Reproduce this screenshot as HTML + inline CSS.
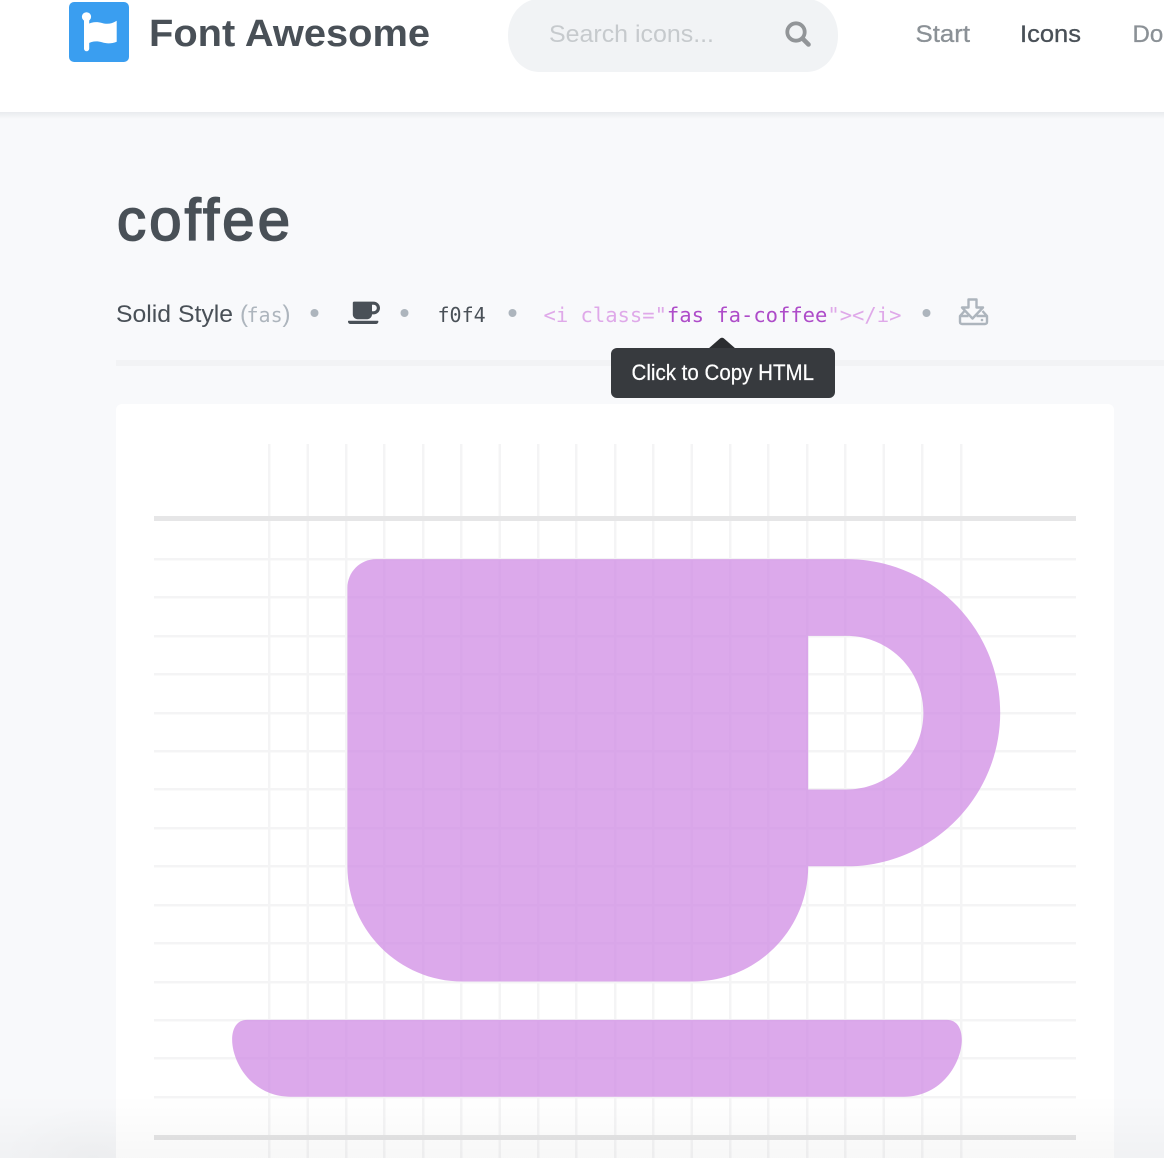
<!DOCTYPE html>
<html lang="en">
<head>
<meta charset="utf-8">
<title>coffee | Font Awesome</title>
<style>
html,body{margin:0;padding:0;width:1164px;height:1158px;overflow:hidden;background:#f8f9fb}
svg{display:block;position:absolute;left:0;top:0}
text{font-family:"Liberation Sans",sans-serif}
.mono,.mono tspan{font-family:"DejaVu Sans Mono",monospace}
</style>
</head>
<body>
<svg width="1164" height="1158" viewBox="0 0 1164 1158" xmlns="http://www.w3.org/2000/svg">
  <defs>
    <linearGradient id="hs" x1="0" y1="0" x2="0" y2="1">
      <stop offset="0" stop-color="#e9ebee"/>
      <stop offset="1" stop-color="#f8f9fb"/>
    </linearGradient>
    <linearGradient id="bot" x1="0" y1="0" x2="0" y2="1">
      <stop offset="0" stop-color="#000" stop-opacity="0"/>
      <stop offset="1" stop-color="#000" stop-opacity=".03"/>
    </linearGradient>
    <radialGradient id="corner" cx=".8" cy="1" r=".8">
      <stop offset="0" stop-color="#000" stop-opacity=".02"/>
      <stop offset="1" stop-color="#000" stop-opacity="0"/>
    </radialGradient>
    <path id="cup" d="M192 384h192c53 0 96-43 96-96h32c70.6 0 128-57.4 128-128S582.6 32 512 32H120c-13.3 0-24 10.700-24 24v232c0 53 43 96 96 96zM512 96c35.300 0 64 28.700 64 64s-28.700 64-64 64h-32V96h32zm47.700 384H48.300c-47.600 0-61-64-36-64h583.300c25 0 11.800 64-35.900 64z"/>
  </defs>

  <!-- page background and header shadow -->
  <rect width="1164" height="1158" fill="#f8f9fb"/>
  <rect y="112" width="1164" height="7" fill="url(#hs)"/>
  <rect width="1164" height="112" fill="#fff"/>

  <!-- logo -->
  <rect x="69" y="2" width="60" height="60" rx="5" fill="#3a9ef0"/>
  <circle cx="86.500" cy="16.800" r="4.600" fill="#fff"/>
  <rect x="84" y="17" width="5.200" height="34.200" rx="2.600" fill="#fff"/>
  <path d="M87 24.500c5-2.800 10-3 15-1.500 5 1.500 9.500 1 14.700-2.300v21c-5 2-9.700 2.200-14.700.6-5-1.600-10-1.300-15 1.700z" fill="#fff"/>
  <text x="149" y="46" font-size="38" font-weight="700" fill="#495057" textLength="281" lengthAdjust="spacingAndGlyphs">Font Awesome</text>

  <!-- search -->
  <rect x="508" y="-1" width="330" height="73" rx="31" ry="36" fill="#f1f3f5"/>
  <text x="549" y="42" font-size="24" fill="#c6cacd" textLength="165" lengthAdjust="spacingAndGlyphs">Search icons...</text>
  <circle cx="796" cy="32" r="8.700" fill="none" stroke="#929598" stroke-width="3.800"/>
  <path d="M802.500 38.500l6 6" fill="none" stroke="#929598" stroke-width="4.600" stroke-linecap="round"/>

  <!-- nav -->
  <text x="915.500" y="42" font-size="24" fill="#8b9196" stroke="#8b9196" stroke-width=".3" textLength="54.500" lengthAdjust="spacingAndGlyphs">Start</text>
  <text x="1020" y="42" font-size="24" fill="#495057" stroke="#495057" stroke-width=".3" textLength="61" lengthAdjust="spacingAndGlyphs">Icons</text>
  <text x="1132.500" y="42" font-size="24" fill="#8b9196" stroke="#8b9196" stroke-width=".3">Do</text>

  <!-- title -->
  <text x="117" y="240" font-size="58" fill="#495057" stroke="#495057" stroke-width="1.700" textLength="173" lengthAdjust="spacing">coffee</text>

  <!-- meta row -->
  <text x="116" y="322" font-size="24" fill="#495057" textLength="117" lengthAdjust="spacingAndGlyphs">Solid Style</text>
  <text x="240" y="322" font-size="24" fill="#adb5bd">(</text>
  <text class="mono" x="246.500" y="322" font-size="20" fill="#adb5bd">fas</text>
  <text x="282.500" y="322" font-size="24" fill="#adb5bd">)</text>
  <circle cx="314.500" cy="313" r="4" fill="#adb5bd"/>
  <use href="#cup" transform="translate(348 300) scale(.05)" fill="#495057"/>
  <circle cx="404.500" cy="313" r="4" fill="#adb5bd"/>
  <text class="mono" x="437.500" y="322" font-size="20" fill="#495057">f0f4</text>
  <circle cx="512.500" cy="313" r="4" fill="#adb5bd"/>
  <text class="mono" x="543.500" y="322" font-size="20.500" fill="#dfa9e9" xml:space="preserve">&lt;i class="<tspan fill="#ae4cc9">fas fa-coffee</tspan>"&gt;&lt;/i&gt;</text>
  <circle cx="926.500" cy="313" r="4" fill="#adb5bd"/>
  <path d="M968.500 299.500h8v8h6.500l-10.500 11-10.500-11h6.500z" fill="none" stroke="#adb5bd" stroke-width="2.400" stroke-linejoin="round"/>
  <path d="M964.500 311l-4.500 5v6c0 1.200.8 2 2 2h23c1.200 0 2-.8 2-2v-6l-4.500-5M960 316h8.500M976.500 316h10.500" fill="none" stroke="#adb5bd" stroke-width="2.400" stroke-linejoin="round"/>
  <circle cx="982" cy="320" r="1.300" fill="#adb5bd"/>

  <!-- divider -->
  <rect x="116" y="360" width="1048" height="6" fill="#f2f3f5"/>

  <!-- card -->
  <rect x="116" y="404" width="998" height="780" rx="6" fill="#fff"/>

  <!-- grid -->
  <g fill="#f4f4f5">
    <rect x="268" y="444" width="2.500" height="714"/>
    <rect x="306.500" y="444" width="2.500" height="714"/>
    <rect x="345" y="444" width="2.500" height="714"/>
    <rect x="383" y="444" width="2.500" height="714"/>
    <rect x="422" y="444" width="2.500" height="714"/>
    <rect x="460" y="444" width="2.500" height="714"/>
    <rect x="498.500" y="444" width="2.500" height="714"/>
    <rect x="537" y="444" width="2.500" height="714"/>
    <rect x="575" y="444" width="2.500" height="714"/>
    <rect x="614" y="444" width="2.500" height="714"/>
    <rect x="652" y="444" width="2.500" height="714"/>
    <rect x="690.500" y="444" width="2.500" height="714"/>
    <rect x="729" y="444" width="2.500" height="714"/>
    <rect x="767" y="444" width="2.500" height="714"/>
    <rect x="806" y="444" width="2.500" height="714"/>
    <rect x="844" y="444" width="2.500" height="714"/>
    <rect x="882.500" y="444" width="2.500" height="714"/>
    <rect x="921" y="444" width="2.500" height="714"/>
    <rect x="960" y="444" width="2.500" height="714"/>
    <rect x="154" y="558" width="922" height="2.500"/>
    <rect x="154" y="596" width="922" height="2.500"/>
    <rect x="154" y="635" width="922" height="2.500"/>
    <rect x="154" y="673" width="922" height="2.500"/>
    <rect x="154" y="712" width="922" height="2.500"/>
    <rect x="154" y="750" width="922" height="2.500"/>
    <rect x="154" y="788" width="922" height="2.500"/>
    <rect x="154" y="827" width="922" height="2.500"/>
    <rect x="154" y="865" width="922" height="2.500"/>
    <rect x="154" y="904" width="922" height="2.500"/>
    <rect x="154" y="942" width="922" height="2.500"/>
    <rect x="154" y="981" width="922" height="2.500"/>
    <rect x="154" y="1019" width="922" height="2.500"/>
    <rect x="154" y="1057" width="922" height="2.500"/>
    <rect x="154" y="1096" width="922" height="2.500"/>
  </g>
  <rect x="154" y="516" width="922" height="5" fill="#e6e6e7"/>
  <rect x="154" y="1135" width="922" height="5" fill="#e4e4e5"/>

  <!-- large cup -->
  <use href="#cup" transform="translate(232.200 520.700) scale(1.200)" fill="rgb(208,140,228)" fill-opacity=".75"/>

  <!-- tooltip -->
  <path d="M708 349l12-10.500c1.200-1 2.800-1 4 0l12 10.500z" fill="#2b2d30"/>
  <rect x="611" y="348" width="224" height="50" rx="6" fill="#373a3e"/>
  <text x="631.500" y="380" font-size="22" fill="#fff" stroke="#fff" stroke-width=".2" textLength="182.500" lengthAdjust="spacingAndGlyphs">Click to Copy HTML</text>

  <!-- bottom shade -->
  <rect y="1095" width="1164" height="63" fill="url(#bot)"/>
  <rect x="0" y="1090" width="116" height="68" fill="url(#corner)"/>
</svg>
</body>
</html>
